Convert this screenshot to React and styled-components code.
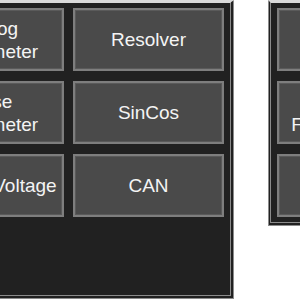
import React from "react";
import styled, { createGlobalStyle } from "styled-components";

const Global = createGlobalStyle`
  html, body { margin: 0; padding: 0; background: #ffffff; overflow: hidden; }
  body { font-family: "Liberation Sans", Arial, sans-serif; }
`;

const Page = styled.div`
  display: flex;
  align-items: flex-start;
  width: 300px;
  height: 300px;
  overflow: hidden;
`;

const Panel = styled.div`
  flex: none;
  box-sizing: content-box;
  background: #212121;
  border-top: 3px solid #dadada;
  border-left: 3px double #8c8c8c;
  border-right: 4px double #8c8c8c;
  border-bottom: 4px double #8c8c8c;
  padding: 5px 6px 5px 6px;
  margin-left: ${(p) => p.$offset}px;
  height: ${(p) => (p.$height ? `${p.$height}px` : "auto")};
`;

const Grid = styled.div`
  display: grid;
  grid-template-columns: repeat(2, 151px);
  grid-auto-rows: 63px;
  column-gap: 9px;
  row-gap: 10px;
`;

const Button = styled.button`
  box-sizing: border-box;
  margin: 0;
  padding: 0 2px;
  background: #4a4a4a;
  border: 2px solid #7e7e7e;
  box-shadow: inset 0 0 0 1px #5a5a5a;
  color: #f4f4f4;
  font-family: "Liberation Sans", Arial, sans-serif;
  font-size: 19px;
  line-height: 23px;
  text-align: center;
  display: flex;
  align-items: center;
  justify-content: center;
`;

const left = [
  "Analog Tachometer",
  "Resolver",
  "Pulse Tachometer",
  "SinCos",
  "DC Link Voltage",
  "CAN",
];

const right = [
  "Incremental Encoder",
  "Absolute Encoder",
  "Overcurrent Fault Handling",
  "Temperature",
  "Digital I/O",
  "Relay",
];

export default function App() {
  return (
    <>
      <Global />
      <Page>
        <Panel $offset={-96} $height={282}>
          <Grid>
            {left.map((t) => (
              <Button key={t}>{t}</Button>
            ))}
          </Grid>
        </Panel>
        <Panel $offset={34}>
          <Grid>
            {right.map((t) => (
              <Button key={t}>{t}</Button>
            ))}
          </Grid>
        </Panel>
      </Page>
    </>
  );
}
